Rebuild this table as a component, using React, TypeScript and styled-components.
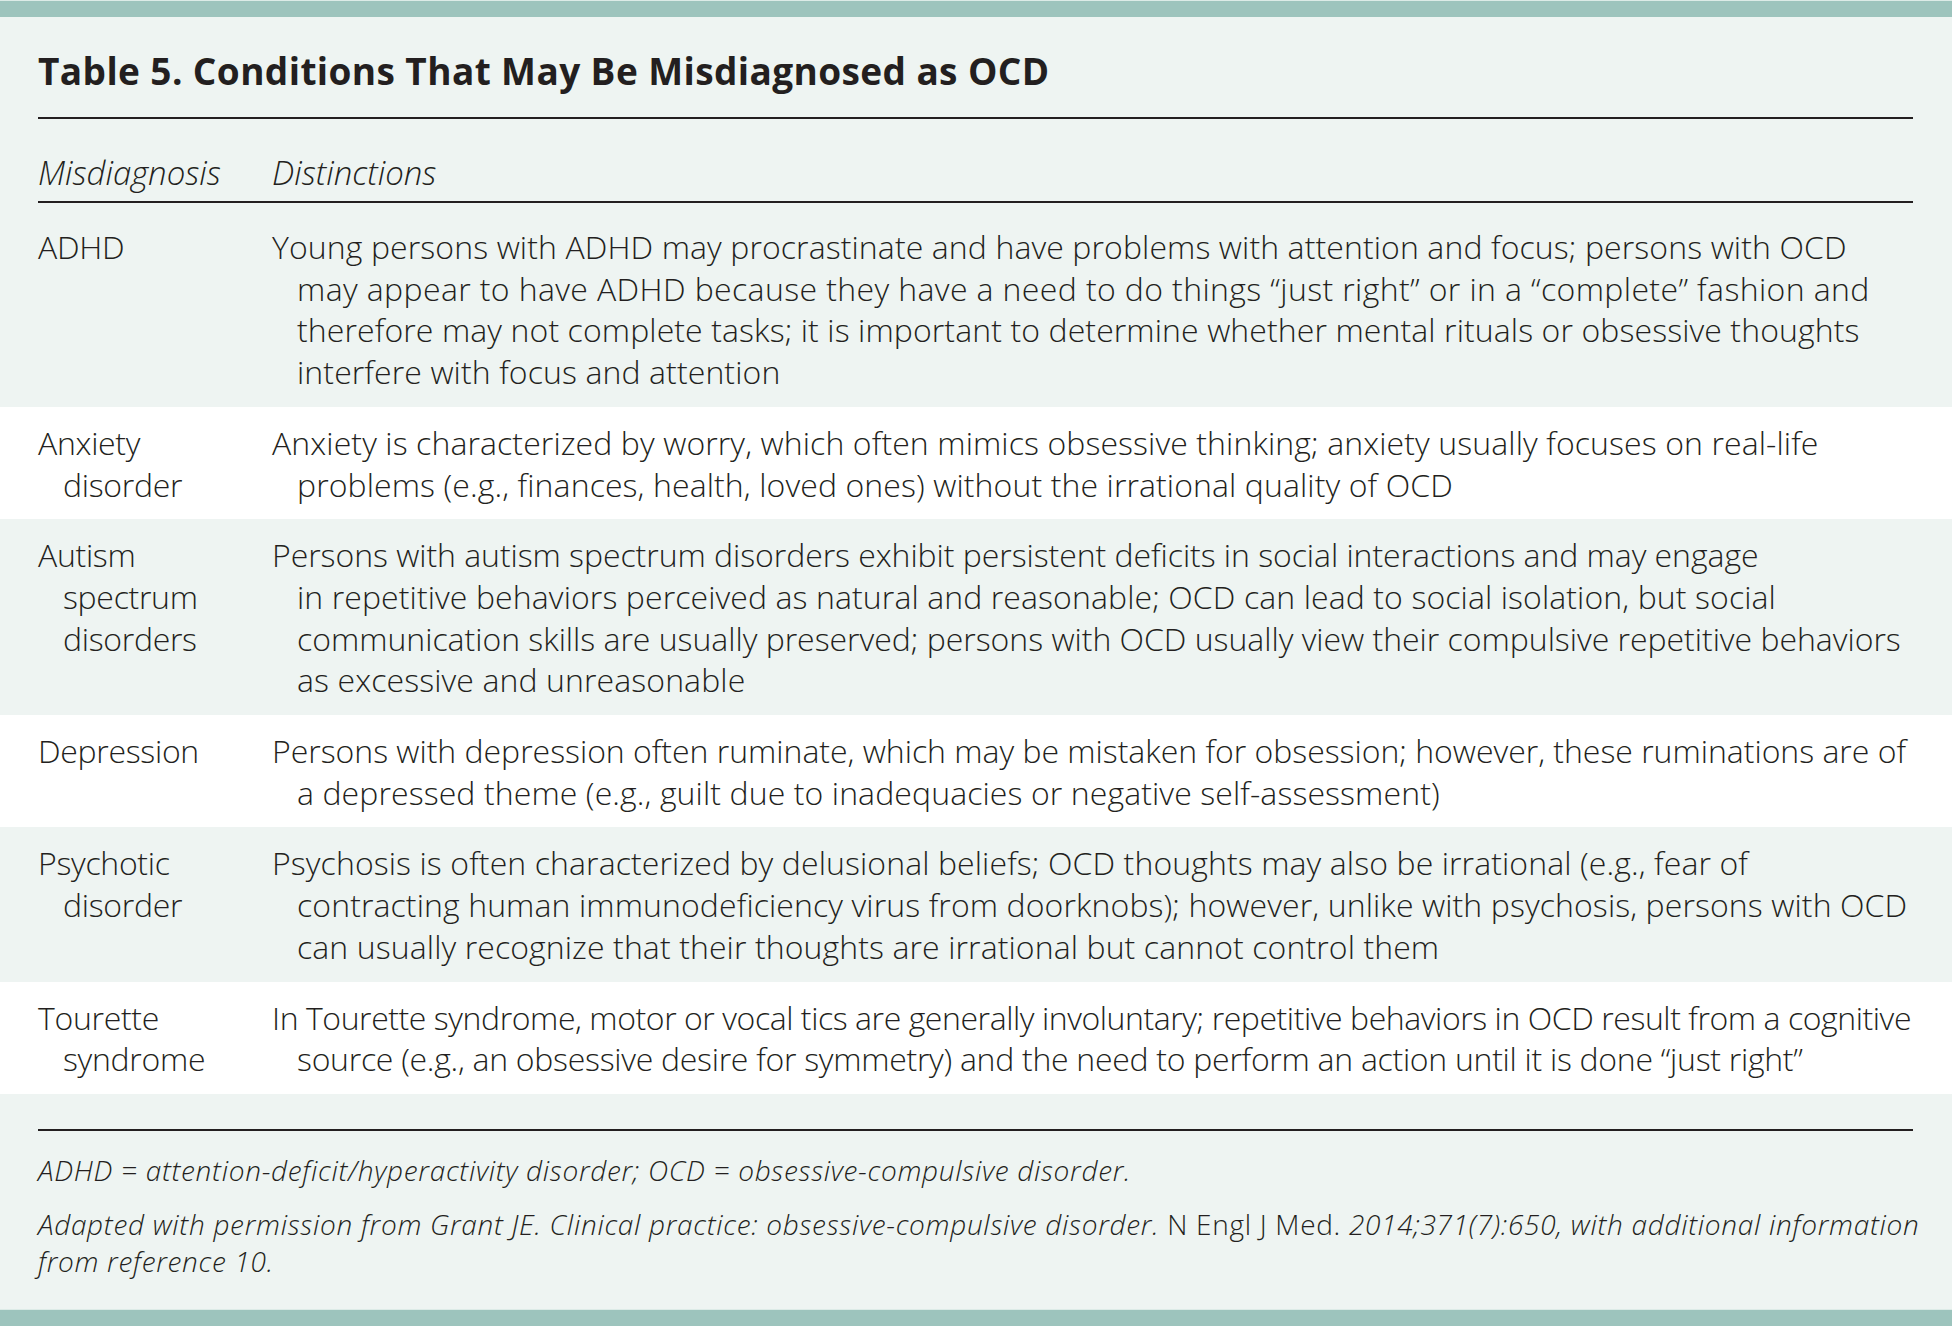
import React from 'react';
import styled, { createGlobalStyle } from 'styled-components';

interface Row {
    label: string[];
    lines: string[];
    // per-line letter-spacing tweaks (px), keyed by line index
    spacing?: Record<number, number>;
}

const rows: Row[] = [
    {
        label: ['ADHD'],
        lines: [
            'Young persons with ADHD may procrastinate and have problems with attention and focus; persons with OCD',
            'may appear to have ADHD because they have a need to do things \u201cjust right\u201d or in a \u201ccomplete\u201d fashion and',
            'therefore may not complete tasks; it is important to determine whether mental rituals or obsessive thoughts',
            'interfere with focus and attention',
        ],
        spacing: { 1: 0.38 },
    },
    {
        label: ['Anxiety', 'disorder'],
        lines: [
            'Anxiety is characterized by worry, which often mimics obsessive thinking; anxiety usually focuses on real-life',
            'problems (e.g., finances, health, loved ones) without the irrational quality of OCD',
        ],
    },
    {
        label: ['Autism', 'spectrum', 'disorders'],
        lines: [
            'Persons with autism spectrum disorders exhibit persistent deficits in social interactions and may engage',
            'in repetitive behaviors perceived as natural and reasonable; OCD can lead to social isolation, but social',
            'communication skills are usually preserved; persons with OCD usually view their compulsive repetitive behaviors',
            'as excessive and unreasonable',
        ],
        spacing: { 0: -0.05, 2: -0.02 },
    },
    {
        label: ['Depression'],
        lines: [
            'Persons with depression often ruminate, which may be mistaken for obsession; however, these ruminations are of',
            'a depressed theme (e.g., guilt due to inadequacies or negative self-assessment)',
        ],
        spacing: { 0: -0.02 },
    },
    {
        label: ['Psychotic', 'disorder'],
        lines: [
            'Psychosis is often characterized by delusional beliefs; OCD thoughts may also be irrational (e.g., fear of',
            'contracting human immunodeficiency virus from doorknobs); however, unlike with psychosis, persons with OCD',
            'can usually recognize that their thoughts are irrational but cannot control them',
        ],
    },
    {
        label: ['Tourette', 'syndrome'],
        lines: [
            'In Tourette syndrome, motor or vocal tics are generally involuntary; repetitive behaviors in OCD result from a cognitive',
            'source (e.g., an obsessive desire for symmetry) and the need to perform an action until it is done \u201cjust right\u201d',
        ],
        spacing: { 0: -0.43, 1: -0.28 },
    },
];

const App: React.FC = () => {
    return (
        <Page>
            <GlobalStyle />
            <Band />
            <Body>
                <Inner>
                    <Title>Table 5. Conditions That May Be Misdiagnosed as OCD</Title>
                    <Rule />
                    <HeadRow>
                        <HeadCell>Misdiagnosis</HeadCell>
                        <HeadCell>Distinctions</HeadCell>
                    </HeadRow>
                    <Rule />
                </Inner>
                {rows.map((row, i) => (
                    <TableRow key={row.label.join(' ')} $shaded={i % 2 === 0} $first={i === 0}>
                        <LabelCell>
                            {row.label.map((l, j) => (
                                <Line key={l} $indent={j > 0}>{l}</Line>
                            ))}
                        </LabelCell>
                        <Cell>
                            {row.lines.map((l, j) => (
                                <Line key={j} $indent={j > 0} $spacing={row.spacing?.[j]}>
                                    {l}
                                </Line>
                            ))}
                        </Cell>
                    </TableRow>
                ))}
                <Footer>
                    <Rule />
                    <Note>ADHD = attention-deficit/hyperactivity disorder; OCD = obsessive-compulsive disorder.</Note>
                    <Note>
                        Adapted with permission from Grant JE. Clinical practice: obsessive-compulsive disorder.{' '}
                        <Upright>N Engl J Med.</Upright> 2014;371(7):650, with additional information
                        <br />
                        from reference 10.
                    </Note>
                </Footer>
            </Body>
            <Band />
        </Page>
    );
};

export default App;

const GlobalStyle = createGlobalStyle`
    html, body {
        margin: 0;
        padding: 0;
        background: #eef4f2;
    }
`;

const Page = styled.div`
    width: 1952px;
    height: 1326px;
    display: flex;
    flex-direction: column;
    background: #eef4f2;
    color: #231f20;
    font-family: "Open Sans", "Liberation Sans", sans-serif;
    font-weight: 300;
    overflow: hidden;
`;

const Band = styled.div`
    height: 17px;
    flex-shrink: 0;
    background: #9dc4bd;
    border-top: 1px solid #dcebe7;
    box-sizing: border-box;
`;

const Body = styled.div`
    flex: 1;
    display: flex;
    flex-direction: column;
`;

const Inner = styled.div`
    padding: 0 39px 0 38px;
`;

const Title = styled.h1`
    margin: 32px 0 24px;
    font-size: 37px;
    line-height: 44px;
    font-weight: 700;
    letter-spacing: 0.4px;
`;

const Rule = styled.div`
    height: 2px;
    background: #231f20;
`;

const HeadRow = styled.div`
    display: grid;
    grid-template-columns: 234px 1fr;
    padding: 32px 0 6px;
`;

const HeadCell = styled.div`
    font-size: 33px;
    line-height: 44px;
    font-style: italic;
`;

const TableRow = styled.div<{ $shaded: boolean; $first: boolean }>`
    display: grid;
    grid-template-columns: 234px 1fr;
    padding: ${p => (p.$first ? '23px' : '15px')} 39px 14px 38px;
    background: ${p => (p.$shaded ? '#eef4f2' : '#ffffff')};
`;

const Cell = styled.div`
    font-size: 32px;
    line-height: 41.7px;
    letter-spacing: 0.1px;
`;

const LabelCell = styled(Cell)`
    letter-spacing: -0.3px;
`;

const Line = styled.div<{ $indent: boolean; $spacing?: number }>`
    white-space: nowrap;
    padding-left: ${p => (p.$indent ? '25px' : '0')};
    ${p => (p.$spacing !== undefined ? `letter-spacing: ${p.$spacing}px;` : '')}
`;

const Footer = styled.div`
    flex: 1;
    padding: 35px 39px 0 38px;
`;

const Note = styled.p`
    margin: 21px 0 0;
    font-size: 28px;
    line-height: 37px;
    font-style: italic;
    letter-spacing: 0.7px;
    white-space: nowrap;

    & + & {
        margin-top: 17px;
    }
`;

const Upright = styled.span`
    font-style: normal;
`;
